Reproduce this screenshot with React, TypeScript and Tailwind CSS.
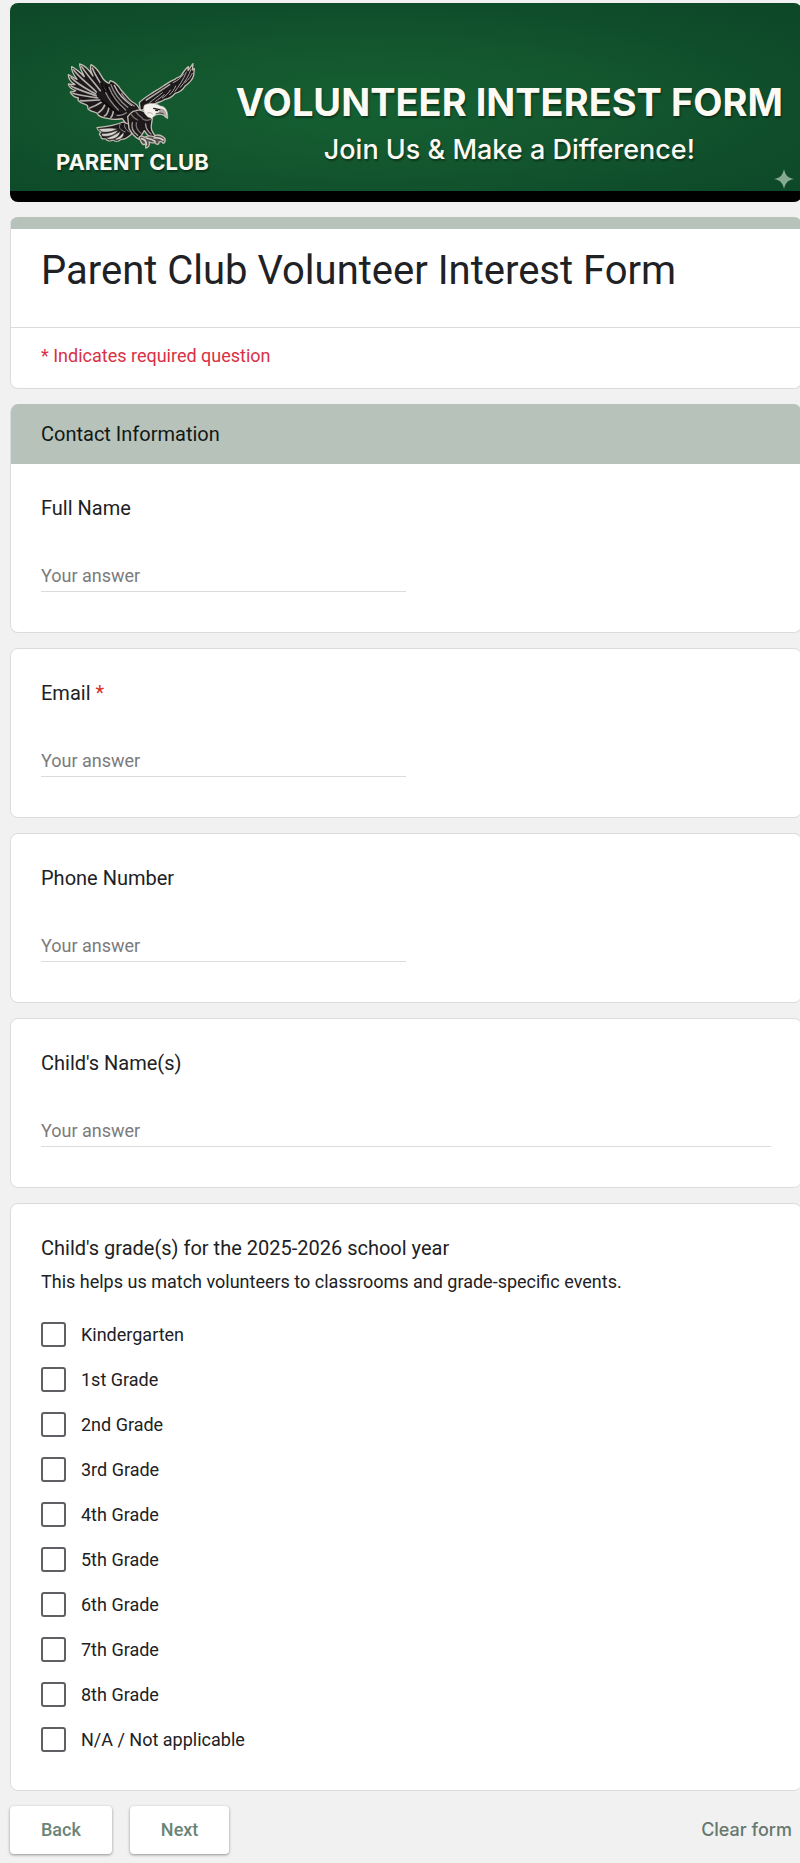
import React from 'react';

const grades = [
  'Kindergarten',
  '1st Grade',
  '2nd Grade',
  '3rd Grade',
  '4th Grade',
  '5th Grade',
  '6th Grade',
  '7th Grade',
  '8th Grade',
  'N/A / Not applicable',
];

function Eagle() {
  return (
    <svg viewBox="80 36 390 264" className="h-[88px] w-[130px]" aria-hidden="true">
      {/* Silhouette with the pale outline */}
      <g fill="#1d191b" stroke="#c3beb2" strokeWidth="4" strokeLinejoin="round">
        <path d="M297 158 C310 144 326 136 342 125 C356 118 364 112 372 106 C384 98 392 92 404 88 C410 80 420 84 424 74 C432 62 438 54 444 50 L443 62 L458 41 L456 60 L462 56 L460 76 C456 90 446 100 434 108 C428 120 416 127 404 130 C396 140 386 146 374 148 C362 158 346 156 334 168 L300 182 Z" />
        <path d="M300 182 C294 168 286 160 276 156 C264 148 254 132 242 120 C234 106 224 96 210 92 L206 100 C196 96 188 88 182 76 C174 62 164 50 152 44 C148 54 152 66 158 78 C148 62 134 46 118 42 C118 56 126 66 132 80 C120 68 106 56 94 50 C92 64 100 74 110 88 C102 84 92 78 84 74 C84 88 92 96 104 104 C96 104 90 104 84 102 C86 114 94 118 106 122 C100 126 96 126 90 126 C94 138 106 142 114 144 C114 150 112 150 114 152 C124 164 136 160 142 168 C142 174 142 174 144 178 C156 188 164 184 170 190 C174 200 190 204 206 206 C220 210 232 208 246 206 L262 228 L300 226 Z" />
        <path d="M248 216 C226 226 200 230 170 233 C172 242 178 244 182 246 C176 252 176 254 182 258 C180 266 188 268 196 266 C200 274 210 274 218 270 C226 276 236 274 242 268 C252 270 262 262 272 254 L280 228 Z" />
        <path d="M262 200 C276 180 292 176 310 184 L336 206 C334 222 330 230 334 240 C338 250 342 254 346 260 L336 268 C330 262 318 254 312 242 L300 262 L296 268 C284 262 274 250 266 236 Z" />
        <path d="M296 262 C300 256 308 258 312 262 C322 256 334 258 340 260 C350 252 362 256 370 262 C378 266 374 280 368 280 C366 274 362 274 356 276 C356 286 348 284 344 278 C336 280 330 278 326 276 C330 284 324 294 316 294 C318 286 314 280 308 284 C302 280 300 272 296 262 Z" fill="#55504e" />
      </g>

      {/* Left wing feathers */}
      <g fill="none" stroke="#b3afac" strokeWidth="5" strokeLinecap="round">
        <path d="M156 54 C164 76 180 98 194 122" />
        <path d="M124 50 C138 72 158 94 180 122" />
        <path d="M100 60 C116 82 142 100 168 126" />
        <path d="M92 82 C110 102 138 116 166 132" />
        <path d="M92 108 C112 120 140 126 168 138" />
        <path d="M98 130 C118 138 144 138 172 144" />
        <path d="M120 152 C138 154 158 150 178 150" />
        <path d="M148 174 C160 170 172 164 184 156" />
        <path d="M174 188 C184 182 190 174 194 164" />
        <path d="M192 198 C202 194 204 184 206 172" />
        <path d="M212 202 C218 196 218 188 220 180" />
      </g>
      <g fill="none" stroke="#0d0b0c" strokeWidth="6" strokeLinecap="round">
        <path d="M182 100 C194 128 208 150 226 170" />
        <path d="M198 108 C212 136 226 158 248 176" />
        <path d="M184 152 C202 166 218 182 240 192" />
      </g>
      <g fill="none" stroke="#8d8888" strokeWidth="4" strokeLinecap="round">
        <path d="M196 128 C206 148 218 164 234 180" />
        <path d="M212 104 C220 128 238 152 262 172" />
        <path d="M222 106 C232 130 250 150 274 166" stroke="#c9c5c2" />
        <path d="M206 112 C216 138 232 160 256 180" />
        <path d="M244 130 C252 146 264 158 282 168" />
        <path d="M230 196 C242 198 250 194 258 188" />
      </g>

      {/* Right wing feathers */}
      <g fill="none" stroke="#aaa5a3" strokeWidth="3" strokeLinecap="round">
        <path d="M318 150 C342 134 364 120 388 104" strokeWidth="5" />
        <path d="M328 158 C342 146 352 140 366 128" />
        <path d="M346 154 C356 146 362 142 372 134" />
        <path d="M366 144 C376 138 384 130 390 120" />
        <path d="M388 134 C396 126 402 118 406 108" />
        <path d="M404 124 C416 108 430 88 438 66" />
        <path d="M420 112 C434 96 446 76 452 58" />
        <path d="M434 98 C446 88 452 78 456 70" />
        <path d="M398 98 C412 92 422 84 430 72" />
      </g>

      {/* Tail */}
      <g fill="#d5d1cb" stroke="#242022" strokeWidth="2">
        <path d="M174 236 C194 236 212 232 232 236 C216 246 200 248 184 246 Z" />
        <path d="M184 250 C200 252 216 246 234 240 C226 256 204 262 184 258 Z" />
        <path d="M196 264 C210 262 224 254 240 244 C238 260 222 270 204 268 Z" />
        <path d="M220 268 C232 264 242 256 250 246 C254 260 240 270 228 270 Z" />
      </g>
      <path d="M240 222 C234 232 238 240 256 246 M254 220 C250 230 256 240 268 246" fill="none" stroke="#8d8888" strokeWidth="3" />

      {/* Breast and thighs */}
      <g fill="none" stroke="#a19c9a" strokeWidth="4" strokeLinecap="round">
        <path d="M276 218 C272 234 280 248 292 256" />
        <path d="M288 218 C286 230 292 242 302 250" stroke="#77716f" />
        <path d="M316 222 C316 234 322 244 332 252" />
        <path d="M284 182 C290 192 296 198 306 204" stroke="#77716f" />
        <path d="M272 192 C276 200 284 206 292 210" stroke="#77716f" />
        <path d="M306 206 C314 212 322 212 330 208" stroke="#77716f" />
      </g>
      <g fill="none" stroke="#d5d1cb" strokeWidth="5" strokeLinecap="round">
        <path d="M304 266 C312 268 318 274 318 284" />
        <path d="M318 264 C328 266 336 268 344 274" />
        <path d="M342 264 C352 262 360 264 368 270" />
      </g>

      {/* Head and beak */}
      <path
        d="M312 166 C324 158 348 158 360 168 C372 168 384 180 382 206 C374 202 372 196 364 194 C350 192 342 196 334 206 C328 200 322 204 318 196 C310 190 308 174 312 166 Z"
        fill="#f4f1ec"
        stroke="#c3beb2"
        strokeWidth="2"
      />
      <path d="M358 176 C370 172 380 184 380 204 C374 196 368 192 356 192 Z" fill="#aaa5a0" />
      <path d="M340 175 L358 179 M346 181 L352 182" stroke="#1d191b" strokeWidth="4" strokeLinecap="round" />
      <path d="M346 192 C354 188 362 188 370 192" fill="none" stroke="#3a3536" strokeWidth="3" />
      <path d="M320 190 C328 186 334 188 338 194" fill="none" stroke="#b3afac" strokeWidth="3" />
    </svg>
  );
}

function Banner() {
  return (
    <header className="relative flex items-end overflow-hidden rounded-lg border-b-[11px] border-black bg-[radial-gradient(ellipse_at_45%_55%,#146033_0%,#14582f_35%,#0f4c2a_75%,#0c4727_100%)] pr-4 pl-[46px] pt-[59px] pb-[17px] font-['Inter',sans-serif] text-[#fdf9f3] [text-shadow:1px_2px_2px_rgb(0_0_0/0.4)]">
      <div className="flex shrink-0 flex-col items-center">
        <Eagle />
        <p className="text-[22px] leading-6 font-bold whitespace-nowrap">PARENT CLUB</p>
      </div>
      <div className="flex-1 pb-1.5 pl-6 text-center">
        <h1 className="text-[38px] leading-11 font-bold">VOLUNTEER INTEREST FORM</h1>
        <p className="mt-2 text-[27px] leading-9 font-medium">Join Us &amp; Make a Difference!</p>
      </div>
      <svg viewBox="0 0 20 20" className="absolute right-2 bottom-0.5 size-5" aria-hidden="true">
        <path d="M10 0 C11.5 6.5 13.5 8.5 20 10 C13.5 11.5 11.5 13.5 10 20 C8.5 13.5 6.5 11.5 0 10 C6.5 8.5 8.5 6.5 10 0 Z" fill="#86a994" />
      </svg>
    </header>
  );
}

type QuestionProps = {
  id: string;
  label: string;
  type?: string;
  required?: boolean;
  wide?: boolean;
};

function Question({ id, label, type = 'text', required, wide }: QuestionProps) {
  return (
    <div className="px-[30px] pt-8 pb-10">
      <label htmlFor={id} className="block text-xl leading-6">
        {label}
        {required && <span className="text-[#d93025]"> *</span>}
      </label>
      <input
        id={id}
        type={type}
        required={required}
        placeholder="Your answer"
        className={`mt-10 block h-8 border-b border-[#dcdcdf] text-lg placeholder:text-[#7b7b7e] focus:border-[#5c7d6f] focus:outline-none ${
          wide ? 'w-full' : 'w-1/2'
        }`}
      />
    </div>
  );
}

function Card({ children }: { children: React.ReactNode }) {
  return (
    <section className="overflow-hidden rounded-lg border border-[#dadce0] bg-white">{children}</section>
  );
}

export default function App() {
  return (
    <div className="min-h-screen overflow-x-hidden bg-[#f1f1f1] pt-[3px] pl-[10px] pb-[10px] font-['Roboto',sans-serif] text-[#202124]">
      <form className="-mr-0.5 flex flex-col gap-[15px]">
        <Banner />

        <section className="overflow-hidden rounded-lg border border-t-12 border-[#dadce0] border-t-[#b7c2ba] bg-white">
          <h2 className="px-[30px] pt-[18px] pb-8 text-[40px] leading-12">Parent Club Volunteer Interest Form</h2>
          <p className="border-t border-[#dadce0] px-[30px] pt-4 pb-5 text-lg leading-6 text-[#d93045]">
            * Indicates required question
          </p>
        </section>

        <section className="overflow-hidden rounded-lg border border-t-0 border-[#dadce0] bg-white">
          <h2 className="bg-[#b7c2ba] px-[30px] py-4 text-xl leading-7 text-[#111814]">Contact Information</h2>
          <Question id="full-name" label="Full Name" />
        </section>

        <Card>
          <Question id="email" label="Email" type="email" required />
        </Card>
        <Card>
          <Question id="phone" label="Phone Number" type="tel" />
        </Card>
        <Card>
          <Question id="child-names" label="Child's Name(s)" wide />
        </Card>

        <Card>
          <fieldset className="px-[30px] pt-8 pb-7">
            <legend className="contents text-xl leading-6">Child's grade(s) for the 2025-2026 school year</legend>
            <p className="mt-2 mb-[18px] text-lg leading-6">
              This helps us match volunteers to classrooms and grade-specific events.
            </p>
            {grades.map((grade) => (
              <label key={grade} className="flex h-[45px] items-center gap-[15px] text-lg">
                <input
                  type="checkbox"
                  name="grades"
                  value={grade}
                  className="size-[25px] appearance-none rounded-[3px] border-2 border-[#5f6063] checked:bg-[#5c7d6f]"
                />
                {grade}
              </label>
            ))}
          </fieldset>
        </Card>

        <div className="flex items-center text-lg font-medium text-[#6a8478]">
          <button type="button" className="h-12 rounded-sm bg-white px-[31px] shadow-[0_1px_3px_rgb(0_0_0/0.4)]">
            Back
          </button>
          <button type="button" className="ml-[18px] h-12 rounded-sm bg-white px-[31px] shadow-[0_1px_3px_rgb(0_0_0/0.4)]">
            Next
          </button>
          <button type="reset" className="mr-[10px] ml-auto font-['Inter',sans-serif] text-[#66776f]">
            Clear form
          </button>
        </div>
      </form>
    </div>
  );
}
